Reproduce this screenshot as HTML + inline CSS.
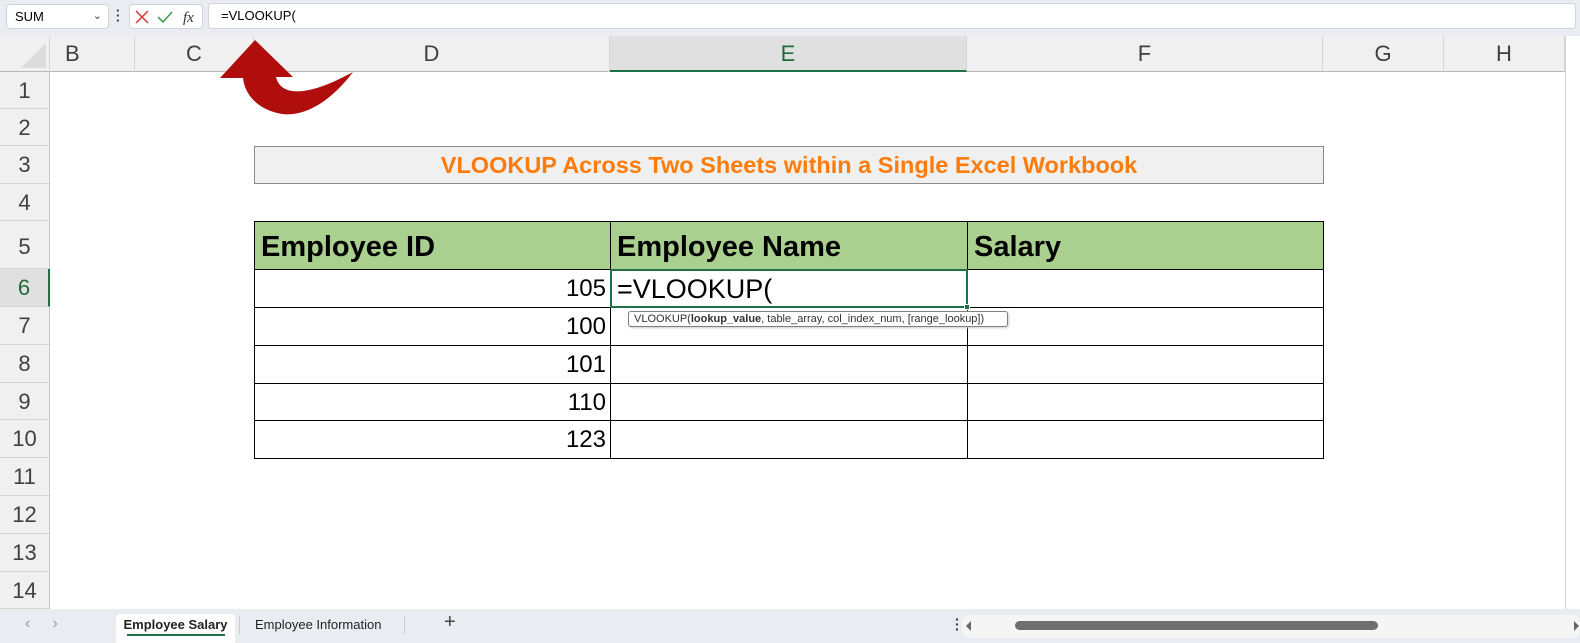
<!DOCTYPE html>
<html><head><style>
*{margin:0;padding:0;box-sizing:border-box}
body{width:1580px;height:643px;overflow:hidden;background:#fff;font-family:"Liberation Sans",sans-serif;position:relative}
.a{position:absolute}
.top{left:0;top:0;width:1580px;height:36px;background:#e9edf2}
.box{background:#fff;border:1px solid #d0d4d9;border-radius:4px}
.colh{top:36px;height:36px;background:#f0f0f0;border-bottom:1px solid #b8b8b8;border-right:1px solid #d4d4d4;color:#404040;font-size:22px;text-align:center;line-height:36px}
.rowh{left:0;width:50px;background:#f0f0f0;border-bottom:1px solid #d4d4d4;border-right:1px solid #c8c8c8;color:#404040;font-size:22px;text-align:center}
.c{border:1px solid #000;font-size:24px;color:#000}
.h{background:#a9d08e;font-weight:bold;font-size:29px;padding-left:6px;line-height:50px}
.n{text-align:right;padding-right:4px;line-height:37px}
</style></head><body>
<div class="a top"></div>
<div class="a box" style="left:6px;top:4px;width:103px;height:25px;font-size:13px;line-height:23px;padding-left:8px">SUM<span style="position:absolute;right:6px;top:0;font-size:11px;color:#444">&#8964;</span></div>
<div class="a" style="left:116px;top:8px;width:3px;height:16px;color:#333;font-size:13px;line-height:5px;font-weight:bold">·<br>·<br>·</div>
<div class="a box" style="left:129px;top:4px;width:74px;height:25px"></div>
<svg class="a" style="left:135px;top:9px" width="60" height="16"><path d="M1 2 L13 14 M13 2 L1 14" stroke="#d8333a" stroke-width="1.5"/><path d="M23 8 L28 13 L37 3" stroke="#3a9a4a" stroke-width="1.5" fill="none"/><text x="48" y="13" font-family="Liberation Serif" font-style="italic" font-size="15" fill="#333">fx</text></svg>
<div class="a box" style="left:208px;top:3px;width:1368px;height:26px;font-size:13px;line-height:24px;padding-left:12px">=VLOOKUP(</div>
<div class="a" style="left:0;top:36px;width:50px;height:36px;background:#f0f0f0;border-bottom:1px solid #b8b8b8;border-right:1px solid #d4d4d4"></div>
<svg class="a" style="left:18px;top:40px" width="30" height="30"><path d="M28 3 L28 28 L3 28 Z" fill="#dcdcdc"/></svg>
<div class="a colh" style="left:50px;width:85px;text-align:left;padding-left:15px">B</div>
<div class="a colh" style="left:135px;width:119px">C</div>
<div class="a colh" style="left:254px;width:356px">D</div>
<div class="a colh" style="left:610px;width:357px;background:#e0e0e0;color:#1d6b3a;border-bottom:2px solid #1e7145">E</div>
<div class="a colh" style="left:967px;width:356px">F</div>
<div class="a colh" style="left:1323px;width:121px">G</div>
<div class="a colh" style="left:1444px;width:121px">H</div>
<div class="a" style="left:1565px;top:36px;width:15px;height:573px;background:#fff;border-left:1px solid #d4d4d4"></div>
<div class="a rowh" style="top:72px;height:37px;line-height:37px">1</div>
<div class="a rowh" style="top:109px;height:37px;line-height:37px">2</div>
<div class="a rowh" style="top:146px;height:38px;line-height:38px">3</div>
<div class="a rowh" style="top:184px;height:37px;line-height:37px">4</div>
<div class="a rowh" style="top:221px;height:48px;line-height:52px">5</div>
<div class="a rowh" style="top:269px;height:38px;line-height:38px;background:#e0e0e0;color:#1d6b3a;border-right:2px solid #1e7145">6</div>
<div class="a rowh" style="top:307px;height:38px;line-height:38px">7</div>
<div class="a rowh" style="top:345px;height:38px;line-height:38px">8</div>
<div class="a rowh" style="top:383px;height:37px;line-height:37px">9</div>
<div class="a rowh" style="top:420px;height:38px;line-height:38px">10</div>
<div class="a rowh" style="top:458px;height:38px;line-height:38px">11</div>
<div class="a rowh" style="top:496px;height:38px;line-height:38px">12</div>
<div class="a rowh" style="top:534px;height:38px;line-height:38px">13</div>
<div class="a rowh" style="top:572px;height:37px;line-height:37px">14</div>
<svg class="a" style="left:0;top:0" width="400" height="130"><path d="M255 40 L293 77 L276 77 C280 94 302 100 353 72 C332 100 306 117 282 114 C259 110 245 96 243 78 L220 78 Z" fill="#b00d0d"/></svg>
<div class="a" style="left:254px;top:146px;width:1070px;height:38px;background:#f0f0f0;border:1px solid #8a8a8a;color:#ff7c0a;font-weight:bold;font-size:23.5px;text-align:center;line-height:36px;white-space:nowrap">VLOOKUP Across Two Sheets within a Single Excel Workbook</div>
<div class="a c h" style="left:254px;top:221px;width:357px;height:49px">Employee ID</div>
<div class="a c h" style="left:610px;top:221px;width:358px;height:49px">Employee Name</div>
<div class="a c h" style="left:967px;top:221px;width:357px;height:49px">Salary</div>
<div class="a c n" style="left:254px;top:269px;width:357px;height:39px">105</div>
<div class="a c n" style="left:254px;top:307px;width:357px;height:39px">100</div>
<div class="a c n" style="left:254px;top:345px;width:357px;height:39px">101</div>
<div class="a c n" style="left:254px;top:383px;width:357px;height:38px">110</div>
<div class="a c n" style="left:254px;top:420px;width:357px;height:39px">123</div>
<div class="a c" style="left:610px;top:307px;width:358px;height:39px"></div>
<div class="a c" style="left:610px;top:345px;width:358px;height:39px"></div>
<div class="a c" style="left:610px;top:383px;width:358px;height:38px"></div>
<div class="a c" style="left:610px;top:420px;width:358px;height:39px"></div>
<div class="a c" style="left:967px;top:269px;width:357px;height:39px"></div>
<div class="a c" style="left:967px;top:307px;width:357px;height:39px"></div>
<div class="a c" style="left:967px;top:345px;width:357px;height:39px"></div>
<div class="a c" style="left:967px;top:383px;width:357px;height:38px"></div>
<div class="a c" style="left:967px;top:420px;width:357px;height:39px"></div>
<div class="a" style="left:610px;top:269px;width:358px;height:39px;border:2px solid #1e7145;font-size:27px;line-height:36px;padding-left:5px;background:#fff">=VLOOKUP(</div>
<div class="a" style="left:964px;top:304px;width:6px;height:6px;background:#1e7145;border:1px solid #fff"></div>
<div class="a" style="left:628px;top:311px;width:380px;height:16px;background:#fff;border:1px solid #808080;border-radius:3px;font-size:11px;line-height:14px;padding-left:5px;color:#333;box-shadow:1px 1px 2px #ccc;white-space:nowrap">VLOOKUP(<b>lookup_value</b>, table_array, col_index_num, [range_lookup])</div>
<div class="a" style="left:0;top:609px;width:1580px;height:34px;background:#e9edf2"></div>
<div class="a" style="left:25px;top:615px;color:#999;font-size:16px">&#8249;&nbsp;&nbsp;&nbsp;&nbsp;&nbsp;&#8250;</div>
<div class="a" style="left:116px;top:614px;width:119px;height:29px;background:#fff;border-radius:5px 5px 0 0;font-size:13px;font-weight:bold;color:#222;text-align:center;line-height:19px;white-space:nowrap;padding-top:1px">Employee Salary<div style="margin:0 auto;width:98px;height:2px;background:#1e7145"></div></div>
<div class="a" style="left:239px;top:616px;width:1px;height:18px;background:#ccc"></div>
<div class="a" style="left:255px;top:617px;font-size:13px;color:#222;white-space:nowrap">Employee Information</div>
<div class="a" style="left:404px;top:616px;width:1px;height:18px;background:#ccc"></div>
<div class="a" style="left:444px;top:611px;font-size:20px;color:#444">+</div>
<div class="a" style="left:955px;top:617px;font-size:14px;line-height:5px;font-weight:bold;color:#333">·<br>·<br>·</div>
<div class="a" style="left:962px;top:615px;width:618px;height:23px;background:#f5f5f5;border-radius:8px"></div>
<div class="a" style="left:1015px;top:621px;width:363px;height:9px;background:#6f6f6f;border-radius:5px"></div>
<div class="a" style="left:966px;top:621px;width:0;height:0;border-top:5px solid transparent;border-bottom:5px solid transparent;border-right:5px solid #666"></div>
<div class="a" style="left:1574px;top:621px;width:0;height:0;border-top:5px solid transparent;border-bottom:5px solid transparent;border-left:5px solid #666"></div>
</body></html>
